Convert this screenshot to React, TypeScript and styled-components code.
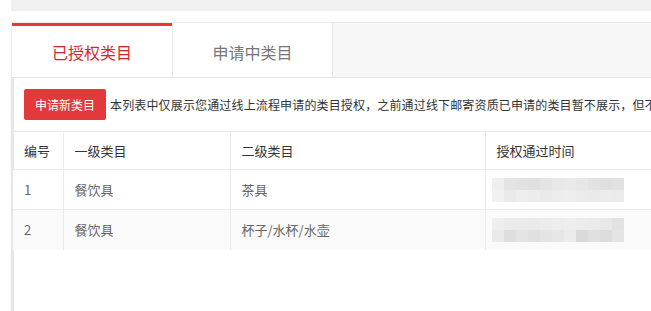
import styled, { createGlobalStyle } from 'styled-components';

type Row = {
  no: number;
  first: string;
  second: string;
  mosaic: string[][];
};

const rows: Row[] = [
  {
    no: 1,
    first: '餐饮具',
    second: '茶具',
    mosaic: [
      ['#efefef', '#e4e4e4', '#e2e2e2', '#e0e0e0', '#e4e4e4', '#e8e8e8', '#e9e9e9', '#e6e6e6', '#e2e2e2', '#e0e0e0', '#e2e2e2'],
      ['#f1f1f1', '#eaeaea', '#eeeeee', '#ececec', '#eaeaea', '#ededed', '#eeeeee', '#ebebeb', '#eaeaea', '#ececec', '#ebebeb'],
    ],
  },
  {
    no: 2,
    first: '餐饮具',
    second: '杯子/水杯/水壶',
    mosaic: [
      ['#eeeeee', '#ebebeb', '#ebebeb', '#eaeaea', '#ececec', '#ededed', '#eeeeee', '#ececec', '#ebebeb', '#e8e8e8', '#e2e2e2'],
      ['#eaeaea', '#dedede', '#e4e4e4', '#e0e0e0', '#e4e4e4', '#e6e6e6', '#ececec', '#dadada', '#e0e0e0', '#dcdcdc', '#e4e4e4'],
    ],
  },
];

const GlobalStyle = createGlobalStyle`
  html, body {
    margin: 0;
    padding: 0;
    background: #fff;
    overflow: hidden;
  }
  body {
    font-family: "Noto Sans CJK SC", "Noto Sans", "Liberation Sans", sans-serif;
    color: #333;
  }
  * {
    box-sizing: border-box;
  }
`;

const App = () => {
  return (
    <>
      <GlobalStyle />
      <Page>
        <TopBar />
        <Card>
          <TabBar>
            <Tab $active>已授权类目</Tab>
            <Tab>申请中类目</Tab>
          </TabBar>
          <Panel>
            <Toolbar>
              <ApplyButton>申请新类目</ApplyButton>
              <Notice>
                本列表中仅展示您通过线上流程申请的类目授权，之前通过线下邮寄资质已申请的类目暂不展示，但不影响您的正常经营。
              </Notice>
            </Toolbar>
            <Table>
              <colgroup>
                <col style={{ width: 50 }} />
                <col style={{ width: 167 }} />
                <col style={{ width: 255 }} />
                <col />
              </colgroup>
              <thead>
                <tr>
                  <HeadCell>编号</HeadCell>
                  <HeadCell>一级类目</HeadCell>
                  <HeadCell>二级类目</HeadCell>
                  <HeadCell>授权通过时间</HeadCell>
                </tr>
              </thead>
              <tbody>
                {rows.map((row, i) => (
                  <BodyRow key={row.no} $striped={i % 2 === 1}>
                    <Cell>{row.no}</Cell>
                    <Cell>{row.first}</Cell>
                    <Cell>{row.second}</Cell>
                    <Cell>
                      <Mosaic>
                        {row.mosaic.map((line, li) => (
                          <MosaicLine key={li}>
                            {line.map((shade, bi) => (
                              <MosaicBlock key={bi} $shade={shade} />
                            ))}
                          </MosaicLine>
                        ))}
                      </Mosaic>
                    </Cell>
                  </BodyRow>
                ))}
              </tbody>
            </Table>
          </Panel>
        </Card>
      </Page>
    </>
  );
};

const Page = styled.div`
  width: 780px;
  height: 311px;
  display: flex;
  flex-direction: column;
`;
const TopBar = styled.div`
  height: 11px;
  margin-left: 11px;
  background-color: #f0f0f0;
`;
const Card = styled.div`
  flex: 1;
  display: flex;
  flex-direction: column;
  margin-top: 11px;
  margin-left: 11px;
  border-top: 1px solid #ececec;
  border-left: 1px solid #ececec;
`;
const TabBar = styled.div`
  display: flex;
  height: 55px;
  background-color: #f7f7f7;
  border-bottom: 1px solid #e8e8e8;
`;
const Tab = styled.div<{ $active?: boolean }>`
  display: flex;
  align-items: center;
  justify-content: center;
  width: ${({ $active }) => ($active ? '160px' : '161px')};
  background-color: #fff;
  font-size: 16px;
  color: ${({ $active }) => ($active ? '#d8262c' : '#777')};
  border-top: ${({ $active }) => ($active ? '3px solid #e4393c' : 'none')};
  border-left: ${({ $active }) => ($active ? 'none' : '1px solid #e8e8e8')};
  border-right: ${({ $active }) => ($active ? 'none' : '1px solid #e8e8e8')};
  padding-top: ${({ $active }) => ($active ? '0' : '3px')};
  cursor: pointer;
`;
const Panel = styled.div`
  flex: 1;
  border-left: 2px solid #e6e6e6;
  box-shadow: -1px 0 2px rgba(0, 0, 0, 0.04);
`;
const Toolbar = styled.div`
  display: flex;
  align-items: center;
  padding: 11px 0 11px 10px;
`;
const ApplyButton = styled.button`
  flex-shrink: 0;
  width: 82px;
  height: 31px;
  border: none;
  border-radius: 2px;
  background-color: #e23a3a;
  color: #fff;
  font-family: inherit;
  font-size: 12px;
  padding: 0;
  cursor: pointer;
`;
const Notice = styled.span`
  margin-left: 4px;
  font-size: 12px;
  letter-spacing: 0.15px;
  color: #333;
  white-space: nowrap;
`;
const Table = styled.table`
  width: 100%;
  margin-left: -1px;
  border-collapse: collapse;
  table-layout: fixed;
  font-size: 13px;
  border-top: 1px solid #ebebeb;
`;
const HeadCell = styled.th`
  height: 38px;
  padding: 0 11px;
  text-align: left;
  font-weight: normal;
  white-space: nowrap;
  color: #333;
  border-left: 1px solid #ebebeb;
  border-bottom: 1px solid #ebebeb;
  &:first-child {
    border-left: none;
  }
`;
const BodyRow = styled.tr<{ $striped: boolean }>`
  background-color: ${({ $striped }) => ($striped ? '#fafafa' : '#fff')};
`;
const Cell = styled.td`
  height: 40px;
  padding: 0 11px;
  white-space: nowrap;
  color: #666;
  border-left: 1px solid #ebebeb;
  border-bottom: 1px solid #ebebeb;
  &:first-child {
    border-left: none;
  }
  tr:last-child > & {
    border-bottom: none;
  }
`;
const Mosaic = styled.div`
  display: flex;
  flex-direction: column;
  margin-left: -5px;
  filter: blur(0.6px);
`;
const MosaicLine = styled.div`
  display: flex;
`;
const MosaicBlock = styled.div<{ $shade: string }>`
  width: 12px;
  height: 12px;
  background-color: ${({ $shade }) => $shade};
`;

export default App;
